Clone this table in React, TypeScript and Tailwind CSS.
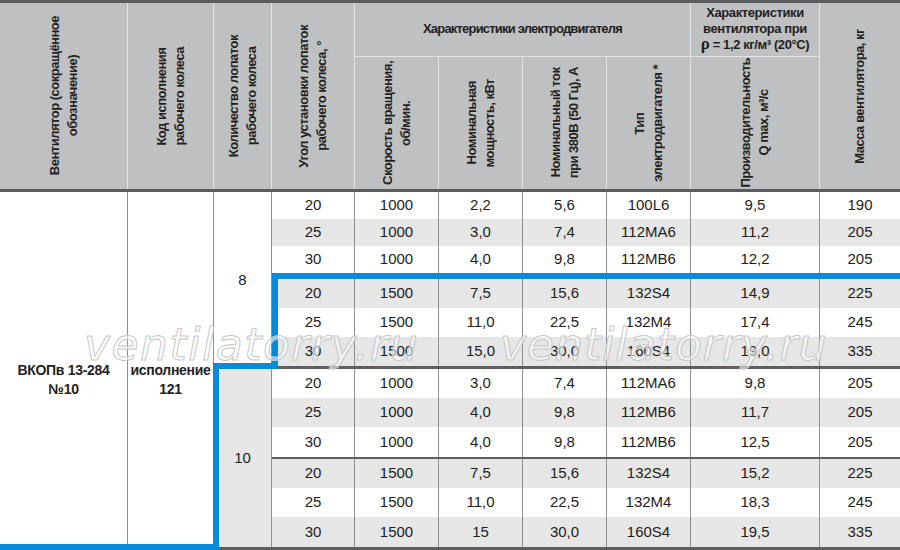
import React from 'react';

const HEAD = "font-['Liberation_Sans',Arial,sans-serif] font-bold text-[#231f20]";
const BODY = "font-['Liberation_Sans',Arial,sans-serif] text-[15px] text-[#1d1d1b]";

const rows: string[][] = [
  ['20', '1000', '2,2', '5,6', '100L6', '9,5', '190'],
  ['25', '1000', '3,0', '7,4', '112MA6', '11,2', '205'],
  ['30', '1000', '4,0', '9,8', '112MB6', '12,2', '205'],
  ['20', '1500', '7,5', '15,6', '132S4', '14,9', '225'],
  ['25', '1500', '11,0', '22,5', '132M4', '17,4', '245'],
  ['30', '1500', '15,0', '30,0', '160S4', '19,0', '335'],
  ['20', '1000', '3,0', '7,4', '112MA6', '9,8', '205'],
  ['25', '1000', '4,0', '9,8', '112MB6', '11,7', '205'],
  ['30', '1000', '4,0', '9,8', '112MB6', '12,5', '205'],
  ['20', '1500', '7,5', '15,6', '132S4', '15,2', '225'],
  ['25', '1500', '11,0', '22,5', '132M4', '18,3', '245'],
  ['30', '1500', '15', '30,0', '160S4', '19,5', '335'],
];

// right-hand columns: angle .. mass
const colW = ['w-[83px]', 'w-[84px]', 'w-[84px]', 'w-[84px]', 'w-[84px]', 'w-[129px]', 'w-[80px]'];

// row heights per group (sum of each group keeps the lines where the print has them)
const groups = [
  { rows: [0, 1, 2], h: ['h-[27px]', 'h-[27px]', 'h-[27px]'], sep: 'h-[6px] bg-[#058bd9]' },
  { rows: [3, 4, 5], h: ['h-[29px]', 'h-[29px]', 'h-[29px]'], sep: 'h-[3px] bg-[#5d5e60]' },
  { rows: [6, 7, 8], h: ['h-[29px]', 'h-[29px]', 'h-[30px]'], sep: 'h-[2px] bg-[#5d5e60]' },
  { rows: [9, 10, 11], h: ['h-[29px]', 'h-[29px]', 'h-[30px]'], sep: '' },
];

const VText: React.FC<{ children: React.ReactNode }> = ({ children }) => (
  <span className="[writing-mode:vertical-rl] rotate-180 text-center text-[13px] leading-[18px] tracking-[-0.5px]">
    {children}
  </span>
);

const hCell = 'flex items-center justify-center border-r border-[#e3e4e5]';

const Header: React.FC = () => (
  <div
    className={`grid grid-cols-[128px_86px_58px_83px_84px_84px_84px_84px_129px_80px] grid-rows-[54px_132px] bg-[#bfc0c2] border-t-[3px] border-b-[3px] border-[#5b5c5e] ${HEAD}`}
  >
    <div className={`${hCell} row-span-2`}>
      <VText>Вентилятор (сокращённое<br />обозначение)</VText>
    </div>
    <div className={`${hCell} row-span-2`}>
      <VText>Код исполнения<br />рабочего колеса</VText>
    </div>
    <div className={`${hCell} row-span-2`}>
      <VText>Количество лопаток<br />рабочего колеса</VText>
    </div>
    <div className={`${hCell} row-span-2`}>
      <VText>Угол установки лопаток<br />рабочего колеса, °</VText>
    </div>
    <div className={`${hCell} col-span-4 border-b text-[13px] tracking-[-0.8px] pb-[1px]`}>
      Характеристики электродвигателя
    </div>
    <div className={`${hCell} border-b text-center text-[13px] leading-[16px] tracking-[-0.4px] pb-[1px]`}>
      <span>
        Характеристики
        <br />
        вентилятора при
        <br />
        <span className="font-['Liberation_Serif',serif] text-[17px] leading-[14px]">ρ</span> = 1,2 кг/м³ (20°С)
      </span>
    </div>
    <div className="row-span-2 flex items-center justify-center">
      <VText>Масса вентилятора, кг</VText>
    </div>
    <div className={hCell}>
      <VText>Скорость вращения,<br />об/мин.</VText>
    </div>
    <div className={hCell}>
      <VText>Номинальная<br />мощность, кВт</VText>
    </div>
    <div className={hCell}>
      <VText>Номинальный ток<br />при 380В (50 Гц), А</VText>
    </div>
    <div className={hCell}>
      <VText>Тип<br />электродвигателя *</VText>
    </div>
    <div className={hCell}>
      <VText>Производительность<br />Q max, м³/с</VText>
    </div>
  </div>
);

const nameCell =
  'h-[355px] flex flex-col items-center justify-center pt-[20px] border-r border-[#8d8e90] text-center text-[14px] leading-[19px] tracking-[-0.3px]';

const Body: React.FC = () => (
  <div className={`flex ${BODY}`}>
    <div className={`w-[128px] ${nameCell} ${HEAD}`}>
      <span>ВКОПв 13-284</span>
      <span>№10</span>
    </div>
    <div className={`w-[86px] ${nameCell} ${HEAD}`}>
      <span>исполнение</span>
      <span>121</span>
    </div>
    <div className="w-[58px] flex flex-col border-r border-[#8d8e90]">
      <div className="h-[177px] flex items-center justify-center bg-white">8</div>
      <div className="h-[178px] flex items-center justify-center bg-[#e5e6e5]">10</div>
    </div>
    <div className="w-[628px] flex flex-col">
      {groups.map((g, gi) => (
        <React.Fragment key={gi}>
          {g.rows.map((ri, k) => (
            <div key={ri} className={`flex ${g.h[k]} ${ri % 2 === 1 ? 'bg-[#e5e6e5]' : 'bg-white'}`}>
              {rows[ri].map((v, ci) => (
                <div
                  key={ci}
                  className={`${colW[ci]} flex items-center justify-center ${ci < 6 ? 'border-r border-[#8d8e90]' : ''}`}
                >
                  {v}
                </div>
              ))}
            </div>
          ))}
          {g.sep && <div className={g.sep} />}
        </React.Fragment>
      ))}
    </div>
  </div>
);

export default function App() {
  return (
    <div className="relative w-[900px] h-[550px] overflow-hidden bg-white">
      <Header />
      <Body />
      <div className="h-[3px] bg-[#5d5e60]" />

      {/* blue highlight line drawn over the table */}
      <svg className="absolute inset-0 pointer-events-none" width="900" height="550" viewBox="0 0 900 550">
        <polyline
          points="900,276 275,276 275,366 216,366 216,547 0,547"
          fill="none"
          stroke="#058bd9"
          strokeWidth="6"
          strokeLinejoin="miter"
        />
      </svg>

      {/* watermarks */}
      <span className="absolute left-[84px] top-[319px] pointer-events-none font-['DejaVu_Sans',sans-serif] italic text-[44px] leading-[52px] tracking-[1.5px] text-white/55 [-webkit-text-stroke:1px_#c6c7c8]">
        ventilatorry.ru
      </span>
      <span className="absolute left-[500px] top-[319px] pointer-events-none font-['DejaVu_Sans',sans-serif] italic text-[44px] leading-[52px] tracking-[1px] text-white/55 [-webkit-text-stroke:1px_#c6c7c8]">
        ventilatorry.ru
      </span>
    </div>
  );
}
